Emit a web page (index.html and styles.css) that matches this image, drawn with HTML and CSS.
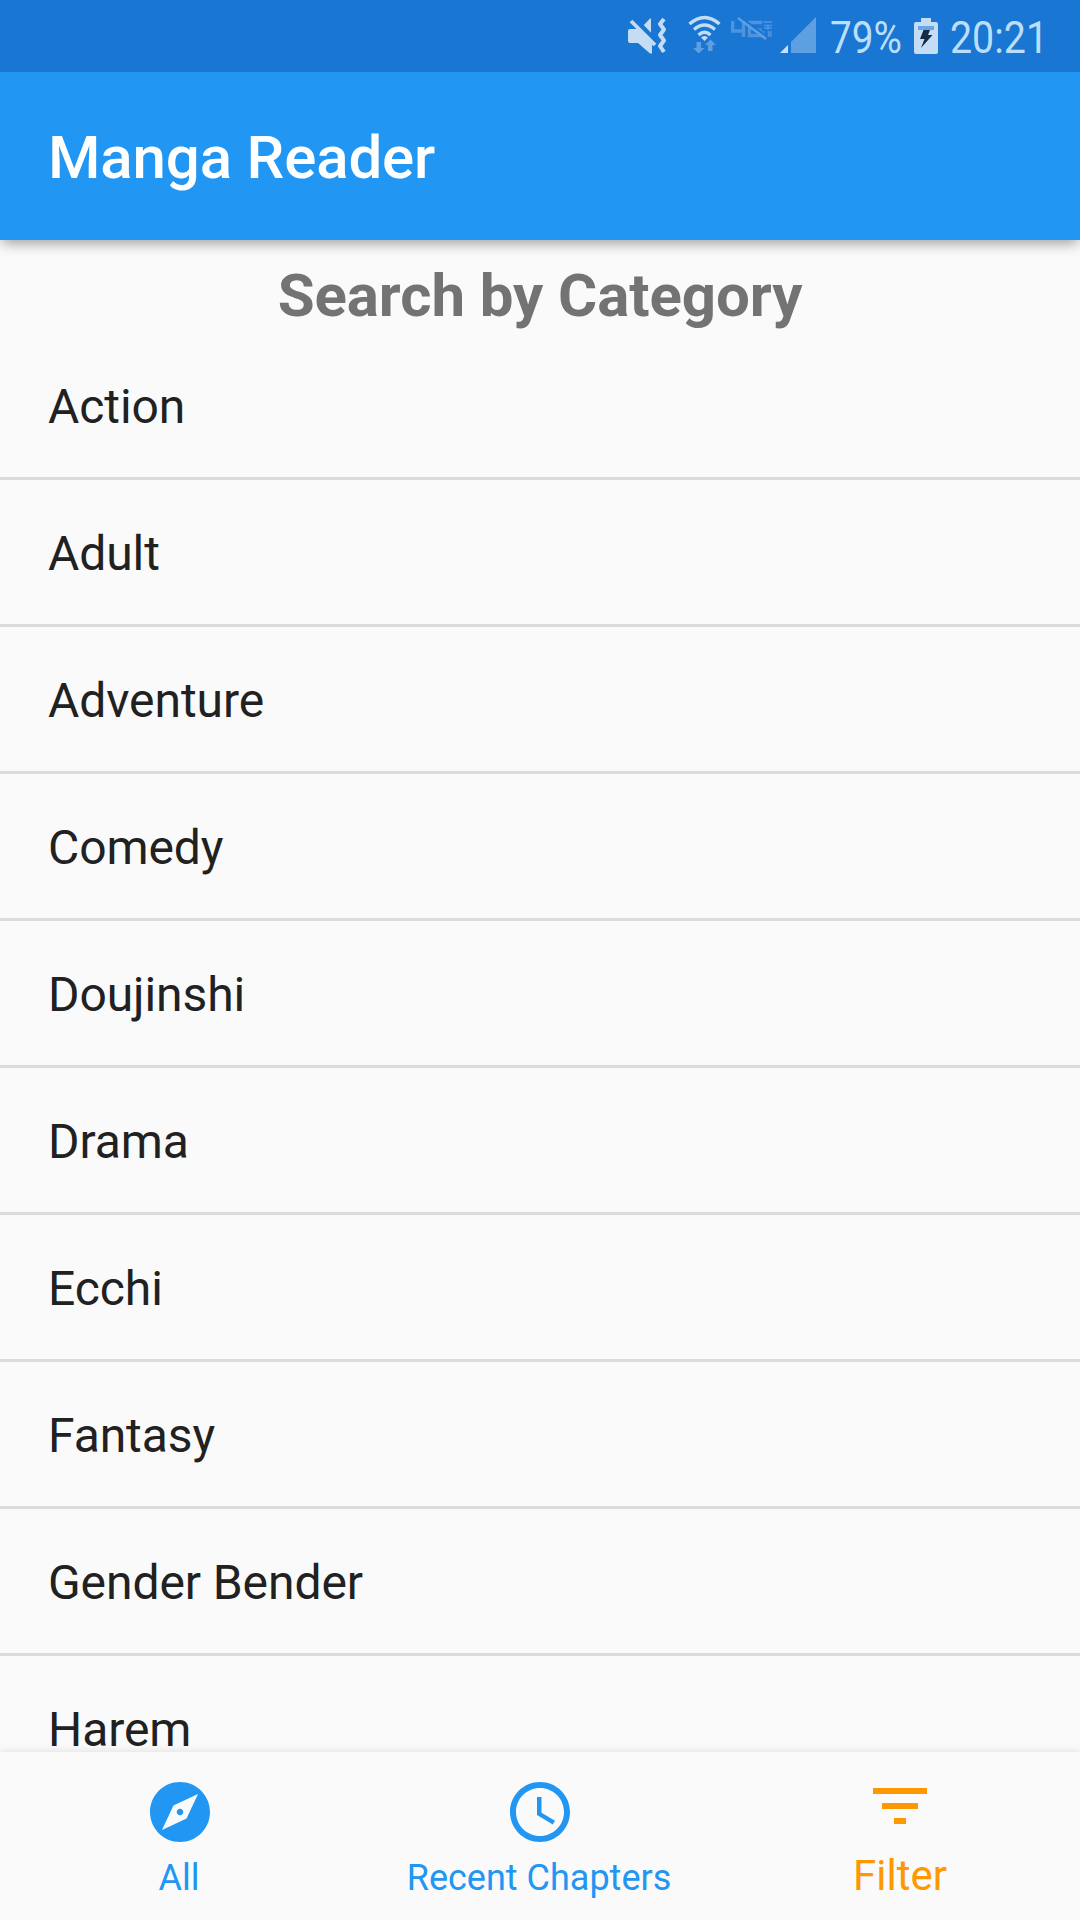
FILE: index.html
```html
<!DOCTYPE html>
<html lang="en">
<head>
<meta charset="utf-8">
<title>Manga Reader</title>
<link rel="stylesheet" href="styles.css">
</head>
<body>
<div class="screen">
  <div class="status-bar">
    <svg class="status-icon" width="60" height="72" viewBox="0 0 60 72">
      <path fill="#c5dcf5" d="M2 29H10L24 42V53.500H22L10 43H2Q0 43 0 41V31Q0 29 2 29ZM14 27L22 18.500H23V35Z"/>
      <path fill="none" stroke="#1976d2" stroke-width="7" d="M5 19L28 43"/>
      <path fill="none" stroke="#c5dcf5" stroke-width="3.800" d="M3 21L27 45"/>
      <path fill="none" stroke="#c5dcf5" stroke-width="4" stroke-linejoin="round" d="M36 19L32 24L36 29.500L32 35L36 40.500L32 46L36 52"/>
    </svg>
    <svg class="status-icon" width="43" height="72" viewBox="0 0 43 72">
      <g fill="none" stroke="#c5dcf5" stroke-width="3.300">
        <path d="M1.500 24Q16.500 11 31.500 24"/>
        <path d="M6 29.500Q16.500 20.500 27 29.500"/>
        <path d="M10.500 35Q16.500 29.500 22.500 35"/>
      </g>
      <path fill="#c5dcf5" d="M13 37.500Q16.500 34.500 20 37.500L16.500 41Z"/>
      <path fill="#5e9fe2" d="M8.500 42H13V48H16.500L10.700 53.500L5 48H8.500ZM20 51V45H17L22.500 39.500L28 45H24.500V51Z"/>
    </svg>
    <svg class="status-icon" width="49" height="72" viewBox="0 0 49 72">
      <g fill="none" stroke="#4d93de" stroke-width="3.400">
        <path d="M1.700 21V31H14M12.500 21V37"/>
        <path d="M31 22.500H18.500V35.500H29V30H24"/>
        <path stroke-width="1.600" d="M32 22H41M33 25.500H41M37 26V30M41 28H33M32.500 31V36H36M41 32H37.500V36H41M37.500 34H41"/>
        <path stroke="#1976d2" stroke-width="2" d="M9.500 17L37 37.500"/>
        <path stroke="#5e9fe2" stroke-width="2.400" d="M7 18L35 39"/>
      </g>
    </svg>
    <svg class="status-icon" width="49" height="72" viewBox="0 0 49 72">
      <path fill="#5e9fe2" d="M11 53V42L36 17V53Z"/>
      <path fill="#c5e2fa" d="M0 53L8 45V53Z"/>
    </svg>
    <svg class="status-icon" width="85" height="72" viewBox="0 0 85 72">
      <text class="status-text" x="1" y="53" textLength="72" lengthAdjust="spacingAndGlyphs">79%</text>
    </svg>
    <svg class="status-icon" width="36" height="72" viewBox="0 0 36 72">
      <path fill="#c5dcf5" d="M7 18H17V22H22Q24 22 24 24V52Q24 54 22 54H2Q0 54 0 52V24Q0 22 2 22H7Z"/>
      <path fill="#69a5e3" d="M4 26H20V30H4Z"/>
      <path fill="#152c44" d="M9.500 30H16L14 35H18.500L7 48L10.500 39H6Z"/>
    </svg>
    <svg class="status-icon" width="98" height="72" viewBox="0 0 98 72">
      <text class="status-text" x="0" y="53" textLength="98" lengthAdjust="spacingAndGlyphs">20:21</text>
    </svg>
  </div>
  <header class="app-bar"><h1 class="app-title">Manga Reader</h1></header>
  <main class="content">
    <h2 class="heading">Search by Category</h2>
    <ul class="categories">
      <li class="category">Action</li>
      <li class="category">Adult</li>
      <li class="category">Adventure</li>
      <li class="category">Comedy</li>
      <li class="category">Doujinshi</li>
      <li class="category">Drama</li>
      <li class="category">Ecchi</li>
      <li class="category">Fantasy</li>
      <li class="category">Gender Bender</li>
      <li class="category">Harem</li>
    </ul>
  </main>
  <nav class="bottom-nav">
    <a class="tab">
      <svg class="tab-icon" viewBox="0 0 24 24"><path d="M12 10.900c-.61 0-1.100.49-1.100 1.100s.49 1.100 1.100 1.100c.61 0 1.100-.49 1.100-1.100s-.49-1.100-1.100-1.100zM12 2C6.480 2 2 6.480 2 12s4.480 10 10 10 10-4.480 10-10S17.520 2 12 2zm2.190 12.190L6 18l3.810-8.190L18 6l-3.810 8.190z"/></svg>
      <span class="tab-label">All</span>
    </a>
    <a class="tab">
      <svg class="tab-icon" viewBox="0 0 24 24"><path d="M11.990 2C6.470 2 2 6.480 2 12s4.470 10 9.990 10C17.520 22 22 17.520 22 12S17.520 2 11.990 2zM12 20c-4.420 0-8-3.580-8-8s3.580-8 8-8 8 3.580 8 8-3.580 8-8 8zm.5-13H11v6l5.250 3.150.75-1.230-4.500-2.670z"/></svg>
      <span class="tab-label">Recent Chapters</span>
    </a>
    <a class="tab tab-active">
      <svg class="tab-icon" viewBox="0 0 24 24"><path d="M10 18h4v-2h-4v2zM3 6v2h18V6H3zm3 7h12v-2H6v2z"/></svg>
      <span class="tab-label">Filter</span>
    </a>
  </nav>
</div>
</body>
</html>
```
FILE: styles.css
```css
* {
  box-sizing: border-box;
  margin: 0;
  padding: 0;
}

body {
  background: #fafafa;
  font-family: Roboto, "Noto Sans", sans-serif;
}

.screen {
  display: flex;
  flex-direction: column;
  width: 1080px;
  height: 1920px;
  overflow: hidden;
}

.status-bar {
  display: flex;
  flex: none;
  justify-content: flex-end;
  height: 72px;
  padding-right: 32px;
  background: #1976d2;
  z-index: 2;
}

.status-icon {
  flex: none;
  display: block;
  overflow: visible;
}

.status-text {
  font-size: 45px;
  fill: #bbdefb;
}

.app-bar {
  display: flex;
  flex: none;
  align-items: center;
  height: 168px;
  padding: 4px 48px 0;
  background: #2196f3;
  box-shadow: 0 6px 12px -3px rgba(0, 0, 0, 0.3), 0 3px 15px rgba(0, 0, 0, 0.1);
  z-index: 1;
}

.app-title {
  color: #fff;
  font-size: 60px;
  font-weight: 500;
  line-height: 70px;
  letter-spacing: -0.15px;
}

.content {
  flex: 1;
  min-height: 0;
  overflow: hidden;
}

.heading {
  height: 93px;
  padding-top: 21px;
  color: #737373;
  font-size: 60px;
  font-weight: 700;
  line-height: 70px;
  text-align: center;
  letter-spacing: -0.08px;
}

.categories {
  list-style: none;
}

.category {
  height: 147px;
  padding-left: 48px;
  border-bottom: 3px solid #dbdbdb;
  color: #212121;
  font-size: 48px;
  line-height: 148px;
  letter-spacing: -0.08px;
}

.bottom-nav {
  display: flex;
  flex: none;
  height: 168px;
  background: #fafafa;
  box-shadow: 0 0 9px rgba(0, 0, 0, 0.12);
  z-index: 1;
}

.tab {
  display: flex;
  flex: 1;
  flex-direction: column;
  align-items: center;
  justify-content: space-between;
  padding: 24px 0 21px;
  color: #2196f3;
  font-size: 36px;
  line-height: 42px;
}

.tab-label {
  padding-right: 2px;
}

.tab-active {
  padding: 18px 0 23px;
  color: #ff9800;
  font-size: 42px;
}

.tab-active .tab-label {
  padding-right: 0;
}

.tab-icon {
  width: 72px;
  height: 72px;
  fill: currentColor;
}
```
